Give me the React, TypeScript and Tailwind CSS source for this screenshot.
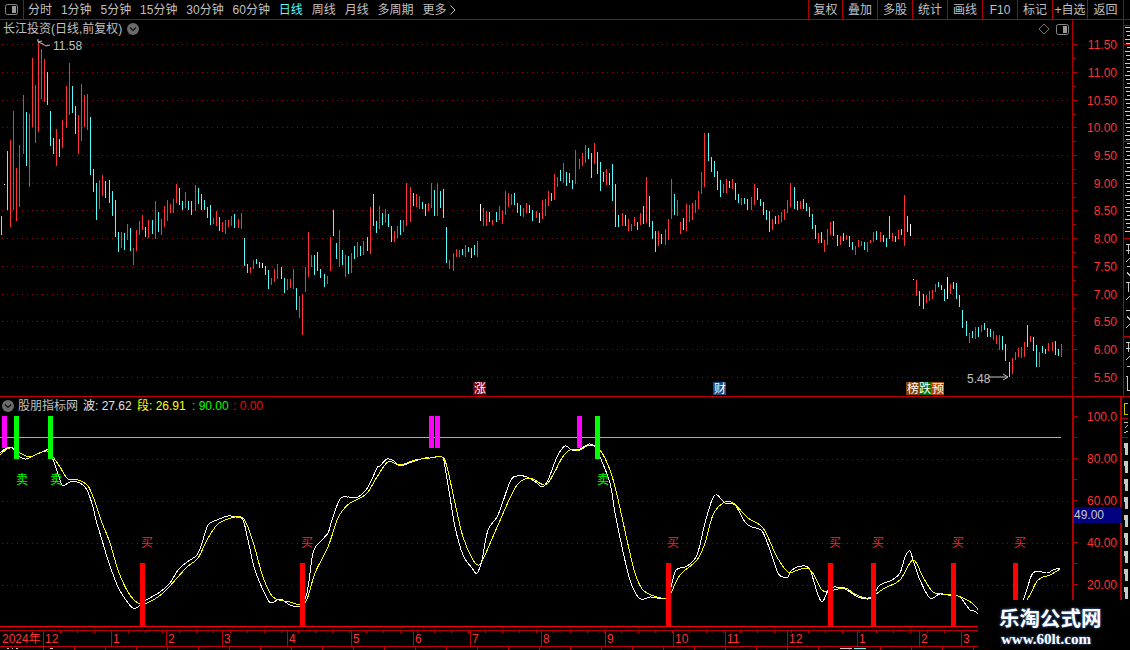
import React from 'react';

type Bar = [number, number, number, 'r' | 'c' | 'w'];

const RED = '#ff3232';
const CYAN = '#54fcfc';
const barColor = { r: RED, c: CYAN, w: '#ffffff' };

// x, top, bottom, colour: one candle each, read off the picture
const bars: Bar[] = [
  [1,216,235,'c'],[4,184,185,'w'],[7,151,210,'c'],[10,140,227,'r'],[13,111,210,'r'],[16,168,221,'r'],[19,145,207,'r'],[23,95,154,'r'],[26,112,166,'c'],[29,114,187,'r'],
  [32,58,127,'r'],[35,85,143,'r'],[38,43,132,'r'],[41,49,99,'r'],[44,59,102,'r'],[47,72,105,'c'],[50,111,146,'c'],[53,138,154,'c'],[56,129,166,'r'],[59,139,157,'c'],
  [62,120,148,'r'],[66,86,128,'r'],[69,63,115,'r'],[72,86,113,'c'],[75,106,134,'c'],[78,115,154,'r'],[81,84,141,'r'],[84,95,127,'r'],[87,94,130,'r'],[90,117,175,'c'],
  [93,169,192,'c'],[96,183,220,'c'],[99,180,209,'r'],[102,175,196,'r'],[105,181,198,'c'],[109,180,203,'c'],[112,191,216,'c'],[115,200,237,'c'],[118,232,252,'c'],[121,232,248,'r'],
  [124,233,250,'c'],[127,224,240,'r'],[130,228,251,'c'],[133,248,265,'r'],[136,230,251,'r'],[139,221,235,'r'],[142,215,230,'r'],[145,227,237,'c'],[148,220,238,'r'],[152,220,234,'c'],
  [155,201,239,'r'],[158,212,232,'c'],[161,219,235,'r'],[164,206,227,'r'],[167,200,221,'r'],[170,204,213,'r'],[173,199,213,'r'],[176,184,203,'r'],[179,188,205,'c'],[182,201,210,'c'],
  [185,192,208,'r'],[188,201,210,'c'],[191,201,215,'c'],[195,185,211,'r'],[198,188,204,'c'],[201,194,210,'c'],[204,200,210,'c'],[207,207,218,'c'],[210,205,225,'c'],[213,218,224,'r'],
  [216,211,226,'r'],[219,217,231,'c'],[222,222,232,'r'],[225,220,234,'r'],[228,220,227,'r'],[231,216,226,'r'],[234,214,228,'c'],[238,219,228,'r'],[241,213,229,'r'],[244,238,266,'c'],
  [247,264,273,'c'],[250,267,273,'r'],[253,260,269,'r'],[256,259,264,'c'],[259,262,268,'c'],[262,263,268,'w'],[265,266,275,'c'],[268,270,289,'c'],[271,278,285,'r'],[274,269,282,'r'],
  [277,264,279,'r'],[281,267,279,'c'],[284,278,293,'c'],[287,279,290,'r'],[290,279,288,'r'],[293,269,289,'r'],[296,288,310,'c'],[299,296,318,'r'],[302,294,335,'r'],[305,267,292,'r'],
  [308,232,277,'r'],[311,255,267,'r'],[314,255,275,'c'],[317,252,271,'c'],[320,269,278,'c'],[324,274,287,'c'],[327,276,284,'r'],[330,237,271,'r'],[333,210,236,'c'],[336,243,259,'c'],
  [339,230,267,'r'],[342,250,265,'c'],[345,255,277,'r'],[348,256,274,'c'],[351,253,273,'r'],[354,246,259,'c'],[357,242,257,'r'],[360,246,256,'c'],[363,241,255,'r'],[367,237,251,'c'],
  [370,207,254,'r'],[373,194,226,'c'],[376,221,233,'c'],[379,206,229,'r'],[382,213,225,'c'],[385,209,223,'r'],[388,214,227,'c'],[391,226,242,'c'],[394,231,242,'r'],[397,226,238,'r'],
  [400,220,235,'c'],[403,220,232,'r'],[406,183,226,'r'],[410,187,222,'r'],[413,193,206,'c'],[416,194,207,'r'],[419,196,209,'r'],[422,202,209,'c'],[425,204,216,'c'],[428,203,211,'r'],
  [431,183,208,'r'],[434,190,216,'c'],[437,183,216,'r'],[440,191,208,'c'],[443,189,218,'c'],[446,227,263,'c'],[449,260,269,'r'],[453,253,271,'r'],[456,249,257,'r'],[459,250,257,'r'],
  [462,249,255,'c'],[465,245,257,'r'],[468,247,252,'c'],[471,248,258,'c'],[474,245,255,'c'],[477,241,257,'r'],[480,204,221,'w'],[483,208,226,'r'],[486,211,226,'r'],[489,212,222,'c'],
  [492,220,225,'r'],[496,212,222,'c'],[499,206,220,'r'],[502,211,224,'r'],[505,191,215,'r'],[508,193,207,'r'],[511,194,205,'r'],[514,193,205,'c'],[517,203,213,'c'],[520,205,216,'c'],
  [523,208,217,'r'],[526,203,213,'r'],[529,205,213,'c'],[532,210,221,'c'],[536,211,218,'r'],[539,213,223,'c'],[542,200,219,'r'],[545,199,216,'r'],[548,191,206,'r'],[551,193,201,'c'],
  [554,174,200,'r'],[557,177,187,'r'],[560,170,181,'c'],[563,163,183,'r'],[566,172,186,'c'],[569,173,183,'c'],[572,180,189,'c'],[575,150,184,'r'],[579,159,169,'r'],[582,153,166,'r'],
  [585,145,163,'r'],[588,148,159,'c'],[591,153,178,'c'],[594,143,164,'r'],[597,152,174,'c'],[600,162,191,'c'],[603,172,182,'c'],[606,169,185,'r'],[609,173,185,'c'],[612,164,201,'c'],
  [615,184,227,'c'],[618,215,227,'c'],[622,213,226,'r'],[625,215,226,'c'],[628,219,231,'r'],[631,224,231,'r'],[634,217,226,'r'],[637,222,230,'c'],[640,213,225,'r'],[643,206,224,'c'],
  [646,177,223,'r'],[649,196,227,'c'],[652,221,239,'c'],[655,231,252,'c'],[658,231,246,'r'],[661,234,244,'c'],[665,229,245,'r'],[668,219,240,'r'],[671,179,219,'r'],[674,194,215,'c'],
  [677,200,216,'r'],[680,222,234,'r'],[683,218,230,'c'],[686,204,231,'r'],[689,205,222,'r'],[692,203,220,'r'],[695,200,213,'r'],[698,191,209,'r'],[701,172,194,'r'],[704,133,187,'r'],
  [708,133,161,'c'],[711,157,172,'c'],[714,161,177,'c'],[717,171,190,'c'],[720,180,197,'c'],[723,184,193,'r'],[726,179,193,'r'],[729,181,188,'c'],[732,179,189,'r'],[735,183,200,'c'],
  [738,194,203,'c'],[741,198,205,'r'],[744,198,204,'c'],[747,199,210,'c'],[751,197,210,'r'],[754,184,205,'r'],[757,188,200,'c'],[760,199,206,'c'],[763,202,215,'c'],[766,210,220,'c'],
  [769,211,232,'c'],[772,219,230,'r'],[775,216,224,'c'],[778,215,224,'r'],[781,212,222,'r'],[784,209,220,'r'],[787,200,213,'r'],[790,183,207,'r'],[794,187,209,'c'],[797,201,210,'c'],
  [800,201,209,'r'],[803,199,209,'c'],[806,203,211,'c'],[809,207,217,'c'],[812,214,229,'c'],[815,225,239,'c'],[818,233,243,'r'],[821,232,243,'c'],[824,240,252,'r'],[827,229,245,'r'],
  [830,222,235,'r'],[833,221,236,'c'],[837,235,246,'c'],[840,236,245,'r'],[843,233,241,'c'],[846,235,240,'r'],[849,236,247,'c'],[852,242,250,'c'],[855,246,255,'r'],[858,240,247,'r'],
  [861,241,246,'r'],[864,242,250,'c'],[867,242,252,'r'],[870,240,243,'r'],[873,232,242,'r'],[876,231,240,'c'],[880,232,242,'r'],[883,235,242,'c'],[886,238,247,'c'],[889,216,239,'c'],
  [892,233,241,'r'],[895,236,242,'c'],[898,230,239,'r'],[901,229,235,'c'],[904,195,246,'r'],[907,216,232,'c'],[910,224,236,'w'],[913,279,280,'w'],[916,280,296,'r'],[919,291,306,'c'],
  [923,294,309,'c'],[926,295,303,'r'],[929,291,301,'r'],[932,290,299,'r'],[935,284,292,'r'],[938,282,287,'c'],[941,285,290,'c'],[944,289,301,'c'],[947,277,299,'w'],[950,284,294,'r'],
  [953,282,289,'c'],[956,283,299,'c'],[959,295,307,'c'],[962,310,328,'c'],[966,321,336,'c'],[969,333,343,'r'],[972,331,338,'c'],[975,327,339,'r'],[978,327,337,'c'],[981,325,332,'r'],
  [984,323,330,'c'],[987,328,337,'c'],[990,329,337,'c'],[993,331,340,'r'],[996,335,344,'r'],[999,335,350,'r'],[1002,336,350,'c'],[1005,344,361,'c'],[1009,362,377,'c'],[1012,358,374,'r'],
  [1015,352,360,'r'],[1018,348,357,'r'],[1021,347,358,'r'],[1024,342,357,'r'],[1027,325,347,'c'],[1030,336,342,'r'],[1033,337,351,'c'],[1036,345,367,'c'],[1039,352,367,'r'],[1042,346,353,'c'],
  [1045,349,354,'c'],[1048,343,351,'r'],[1052,342,351,'r'],[1055,341,355,'c'],[1058,349,356,'c'],[1061,344,357,'r'],
];

const whiteLine = [
  [0,453],[5,449],[10,447],[14,450],[20,457],[26,459],[35,455],[44,451],[48,450],[52,457],[56,468],[60,480],[63,486],[70,482],[80,483],[87,490],[93,507],[96,520],
  [102,540],[108,560],[118,587],[128,603],[133,608],[138,607],[143,602],[160,592],[170,583],[178,570],[187,562],[197,555],[202,543],[208,525],[217,520],[228,516],[236,517],[243,520],
  [248,540],[255,570],[267,598],[272,603],[280,599],[290,605],[300,606],[307,593],[313,553],[320,542],[328,533],[332,520],[340,499],[348,497],[358,497],[368,487],[377,468],[380,466],
  [387,459],[394,461],[400,466],[412,462],[425,458],[430,458],[442,457],[445,467],[450,497],[455,527],[463,555],[472,568],[477,573],[482,560],[488,530],[498,515],[510,482],[517,476],
  [527,477],[537,483],[542,487],[548,480],[557,457],[565,446],[572,450],[580,449],[589,444],[595,447],[600,457],[610,483],[615,513],[622,547],[630,580],[638,597],[644,599],[650,597],
  [657,598],[666,598],[671,587],[676,570],[687,566],[697,555],[705,523],[712,500],[717,495],[725,503],[735,505],[745,522],[752,527],[762,531],[770,550],[778,573],[783,577],[788,577],
  [792,570],[802,566],[810,570],[818,595],[823,601],[830,588],[843,588],[850,592],[858,597],[867,599],[872,597],[880,585],[892,580],[900,573],[905,557],[910,551],[913,560],[920,580],
  [930,598],[940,594],[953,596],[960,597],[970,610],[977,613],[1000,640],[1023,600],[1033,573],[1047,573],[1053,570],[1060,568],
];

const yellowLine = [
  [0,455],[7,449],[13,448],[20,453],[30,457],[37,454],[47,451],[53,457],[60,467],[68,479],[78,480],[88,486],[95,502],[101,520],[110,543],[118,570],[128,592],[138,603],[147,603],
  [163,593],[177,578],[187,567],[198,558],[207,540],[217,525],[228,519],[243,518],[253,542],[263,577],[273,597],[290,602],[305,603],[315,573],[328,547],[337,520],[343,510],[350,503],
  [362,497],[368,492],[377,477],[388,462],[400,465],[415,460],[430,458],[442,457],[447,467],[455,503],[463,537],[473,560],[479,565],[485,555],[498,525],[515,488],[525,479],[533,479],
  [545,485],[553,475],[562,458],[570,450],[580,450],[590,445],[600,450],[610,470],[617,495],[627,540],[635,573],[643,590],[657,597],[666,598],[671,593],[680,575],[697,560],[705,543],
  [713,515],[723,503],[733,503],[748,518],[763,528],[777,557],[788,572],[795,571],[805,568],[812,572],[822,590],[830,591],[845,588],[855,594],[868,598],[885,588],[900,580],[913,560],
  [923,577],[933,592],[943,594],[958,596],[967,600],[977,608],[1000,640],[1027,600],[1038,580],[1050,575],[1060,569],
];

// catmull-rom through the read points, so the curves don't look like polygons
function smooth(p: number[][]) {
  let d = `M${p[0][0]} ${p[0][1]}`;
  for (let i = 0; i < p.length - 1; i++) {
    const a = p[Math.max(i - 1, 0)], b = p[i], c = p[i + 1], e = p[Math.min(i + 2, p.length - 1)];
    d += ` C${b[0] + (c[0] - a[0]) / 6} ${b[1] + (c[1] - a[1]) / 6} ${c[0] - (e[0] - b[0]) / 6} ${c[1] - (e[1] - b[1]) / 6} ${c[0]} ${c[1]}`;
  }
  return d;
}

const priceLabels = ['11.50','11.00','10.50','10.00','9.50','9.00','8.50','8.00','7.50','7.00','6.50','6.00','5.50'];
const priceY = (i: number) => Math.round(44.3 + i * 27.69);
const lowerGrid = [459, 501, 543, 585];
const lowerLabels: [string, number][] = [['100.0',416],['80.00',458],['60.00',500],['40.00',542],['20.00',584]];

const redBars = [140, 300, 666, 828, 871, 951, 1013];
const buyText = [147, 307, 673, 835, 878, 958, 1020];
const sellText = [22, 56, 603];

const monthMarks: [string, number][] = [['1',111],['2',166],['3',222],['4',287],['5',351],['6',413],['7',470],['8',541],['9',605],['10',673],['11',725],['12',787],['1',857],['2',919],['3',961]];

const leftTabs = ['分时','1分钟','5分钟','15分钟','30分钟','60分钟','日线','周线','月线','多周期'];
const rightTabs: [string, string][] = [
  ['复权','w-[34px]'],['叠加','w-[35px]'],['多股','w-[35px]'],['统计','w-[35px]'],['画线','w-[35px]'],
  ['F10','w-[35px]'],['标记','w-[35px]'],['+自选','w-[35px]'],['返回','w-[37px]'],
];

function PanelIcon() {
  return (
    <svg width="13" height="11" viewBox="0 0 13 11">
      <rect x="0.5" y="0.5" width="12" height="10" rx="2" fill="none" stroke="#888" />
      <rect x="7" y="2" width="4" height="7" fill="#999" />
    </svg>
  );
}

function ChevronDot() {
  return (
    <svg width="12" height="12" viewBox="0 0 12 12" className="shrink-0">
      <circle cx="6" cy="6" r="6" fill="#6a6a6a" />
      <path d="M3 4.5 L6 7.5 L9 4.5" fill="none" stroke="#111" strokeWidth="1.2" />
    </svg>
  );
}

function Dotted({ y, x2 }: { y: number; x2: number }) {
  return <line x1={2} x2={x2} y1={y + 0.5} y2={y + 0.5} stroke="#8c0c0c" strokeDasharray="1 4" />;
}

function Toolbar() {
  return (
    <div className="flex h-[20px] shrink-0 items-stretch border-b border-[#b00000] text-[12px] leading-none text-[#c0c0c0]">
      <div className="flex w-[24px] items-center justify-center border-r border-[#b00000]">
        <PanelIcon />
      </div>
      <div className="ml-[4px] flex items-center gap-[8.9px]">
        {leftTabs.map((t) => (
          <span key={t} className={t === '日线' ? 'text-[#54fcfc]' : ''}>{t}</span>
        ))}
        <span className="flex items-center gap-[4px]">
          更多
          <svg width="6" height="10" viewBox="0 0 6 10"><path d="M0.5 0.5 L5 5 L0.5 9.5" fill="none" stroke="#c0c0c0" /></svg>
        </span>
      </div>
      <div className="ml-auto mr-[6px] flex">
        {rightTabs.map(([t, w]) => (
          <div key={t} className={`flex items-center justify-center border-l border-[#b00000] last:border-r ${w}`}>{t}</div>
        ))}
      </div>
    </div>
  );
}

function MainChart() {
  return (
    <svg width="1072" height="358" viewBox="0 38 1072 358" className="block" shapeRendering="crispEdges">
      {priceLabels.map((_, i) => <Dotted key={i} y={priceY(i)} x2={1072} />)}
      {bars.map(([x, t, b, c]) => (
        <rect key={x} x={x} y={t} width={1} height={b - t} fill={barColor[c]} />
      ))}
      <g shapeRendering="auto">
        <path d="M50 45 L46 46 L43 44 L38 42 M38 39 L38 42 L42 41" fill="none" stroke="#c0c0c0" />
        <text x={53} y={50} fontSize={12} fill="#c0c0c0">11.58</text>
        <text x={967} y={383} fontSize={12} fill="#c0c0c0">5.48</text>
        <path d="M988 377 L1008 377 M1003 374 L1008 377 L1003 380" fill="none" stroke="#c0c0c0" />
      </g>
      <rect x={473} y={382} width={13} height={13} fill="#700000" />
      <rect x={713} y={382} width={13} height={13} fill="#1a4a80" />
      <rect x={906} y={382} width={13} height={13} fill="#804000" />
      <rect x={919} y={382} width={12} height={13} fill="#007000" />
      <rect x={931} y={382} width={13} height={13} fill="#b04808" />
      <g fontSize={12} fill="#ffffff" shapeRendering="auto">
        <text x={474} y={393}>涨</text>
        <text x={714} y={393}>财</text>
        <text x={907} y={393}>榜</text>
        <text x={919} y={393}>跌</text>
        <text x={932} y={393}>预</text>
      </g>
    </svg>
  );
}

function IndicatorChart() {
  return (
    <svg width="1072" height="212" viewBox="0 414 1072 212" className="block" shapeRendering="crispEdges">
      {lowerGrid.map((y) => <Dotted key={y} y={y} x2={1072} />)}
      <rect x={0} y={437} width={1061} height={1} fill="#33ff33" />
      <path d={smooth(whiteLine)} fill="none" stroke="#ffffff" />
      <path d={smooth(yellowLine)} fill="none" stroke="#ffff00" />
      {[2, 429, 435, 577].map((x) => <rect key={x} x={x} y={416} width={5} height={32} fill="#ff00ff" />)}
      {[14, 48, 595].map((x) => <rect key={x} x={x} y={416} width={5} height={43} fill="#00ff00" />)}
      {redBars.map((x) => <rect key={x} x={x} y={563} width={5} height={63} fill="#ff0000" />)}
      <g fontSize={12} textAnchor="middle" shapeRendering="auto">
        {buyText.map((x) => <text key={x} x={x} y={547} fill="#ff2020">买</text>)}
        {sellText.map((x) => <text key={x} x={x} y={484} fill="#00ff00">卖</text>)}
      </g>
    </svg>
  );
}

function PriceAxis() {
  return (
    <svg width="50" height="376" viewBox="1073 20 50 376" className="block" shapeRendering="crispEdges">
      {priceLabels.map((t, i) => (
        <g key={t}>
          <rect x={1073} y={priceY(i)} width={4} height={1} fill="#b00000" />
          {i < 12 && <rect x={1073} y={priceY(i) + 14} width={3} height={1} fill="#b00000" />}
          <text x={1117} y={priceY(i) + 5} textAnchor="end" fontSize={12} fill={RED} shapeRendering="auto">{t}</text>
        </g>
      ))}
    </svg>
  );
}

function IndicatorAxis() {
  return (
    <svg width="46" height="229" viewBox="1074 397 46 229" className="block" shapeRendering="crispEdges">
      {lowerLabels.map(([t, y]) => (
        <g key={t}>
          <rect x={1074} y={y} width={4} height={1} fill="#b00000" />
          <rect x={1074} y={y + 21} width={3} height={1} fill="#b00000" />
          <text x={1117} y={y + 5} textAnchor="end" fontSize={12} fill={RED} shapeRendering="auto">{t}</text>
        </g>
      ))}
    </svg>
  );
}

function UpperStrip() {
  const dashes = Array.from({ length: 52 }, (_, i) => 27 + i * 4);
  return (
    <svg width="6" height="376" viewBox="1124 20 6 376" className="block" shapeRendering="crispEdges">
      {[25, 44, 141, 238, 336].map((y) => <rect key={y} x={1124} y={y} width={6} height={1} fill="#b00000" />)}
      {dashes.map((y, i) => <rect key={y} x={1125 + (i % 3)} y={y} width={5} height={1} fill="#d0d0d0" />)}
      <path d="M1126 244H1130M1128 244V254M1126 250H1130M1126 262L1130 258M1127 266H1130M1127 272L1130 276M1126 282H1130M1128 282V292M1126 300L1130 296M1126 310H1130M1127 316L1130 320M1126 328L1130 324M1126 342H1130M1128 342V352M1126 348H1130M1126 360L1130 356M1127 366H1130M1126 376H1127V390H1130" fill="none" stroke="#c8c8c8" />
    </svg>
  );
}

function LowerStrip() {
  const blocks = Array.from({ length: 9 }, (_, i) => 443 + i * 18);
  return (
    <svg width="6" height="229" viewBox="1124 397 6 229" className="block" shapeRendering="crispEdges">
      <rect x={1126.5} y={403.5} width={5} height={11} fill="none" stroke="#c8c800" />
      <rect x={1124} y={418} width={6} height={1} fill="#b00000" />
      <path d="M1126 422H1130M1127 428L1130 425M1126 433L1130 431" fill="none" stroke="#c8c8c8" />
      <rect x={1124} y={437} width={6} height={1} fill="#b00000" />
      {blocks.map((y) => (
        <g key={y}>
          <rect x={1126} y={y} width={4} height={5} fill="#c8c8c8" />
          <rect x={1127} y={y + 5} width={3} height={7} fill="#c8c8c8" />
        </g>
      ))}
    </svg>
  );
}

function TimeAxis() {
  const ticks = Array.from({ length: 57 }, (_, i) => 60 + i * 17);
  const lower = Array.from({ length: 31 }, (_, i) => 43 + i * 31);
  return (
    <svg width="978" height="24" viewBox="0 626 978 24" className="block" shapeRendering="crispEdges">
      <rect x={0} y={626} width={978} height={1} fill="#ff0000" />
      <rect x={0} y={630} width={978} height={1} fill="#c00000" />
      <rect x={0} y={646} width={978} height={1} fill="#c00000" />
      <rect x={43} y={630} width={1} height={16} fill="#c00000" />
      {ticks.map((x) => <rect key={x} x={x} y={631} width={1} height={2} fill="#c00000" />)}
      {lower.map((x) => <rect key={x} x={x} y={647} width={1} height={3} fill="#c00000" />)}
      {monthMarks.map(([t, x], i) => (
        <g key={i}>
          <rect x={x} y={630} width={1} height={16} fill="#c00000" />
          <text x={x + 2} y={643} fontSize={12} fill={RED} shapeRendering="auto">{t}</text>
        </g>
      ))}
      <g fontSize={12} fill={RED} shapeRendering="auto">
        <text x={2} y={643}>2024年</text>
        <text x={45} y={643}>12</text>
      </g>
      <path d="M7 648H9M12 648H13M16 648H18M50 648H53M840 648H852" stroke="#c8c8c8" />
      <path d="M854 648H866" stroke="#54fcfc" />
    </svg>
  );
}

export default function App() {
  return (
    <div className="relative flex h-[650px] w-[1130px] flex-col overflow-hidden bg-black [font-family:'Liberation_Sans','Noto_Sans_CJK_SC',sans-serif]">
      <Toolbar />

      <div className="flex h-[377px] shrink-0 border-b border-[#c00000]">
        <div className="flex w-[1072px] flex-col">
          <div className="flex h-[18px] shrink-0 items-center pl-[3px] text-[12px] leading-none text-[#c0c0c0]">
            <span>长江投资(日线,前复权)</span>
            <span className="ml-[5px]"><ChevronDot /></span>
            <svg width="12" height="12" viewBox="0 0 12 12" className="ml-auto mr-[6px]">
              <path d="M6 1 L11 6 L6 11 L1 6 Z" fill="none" stroke="#777" />
            </svg>
            <span className="mr-[3px]"><PanelIcon /></span>
          </div>
          <MainChart />
        </div>
        <div className="w-[51px] border-l border-[#b00000]"><PriceAxis /></div>
        <div className="w-[7px] border-l border-[#b00000]"><UpperStrip /></div>
      </div>

      <div className="flex h-[229px] shrink-0">
        <div className="flex w-[1072px] flex-col">
          <div className="flex h-[17px] shrink-0 items-center pl-[2px] text-[12px] leading-none text-[#c0c0c0]">
            <ChevronDot />
            <span className="ml-[4px]">股朋指标网</span>
            <span className="ml-[5px] w-[54px] text-[#e0e0e0]">波: 27.62</span>
            <span className="w-[55px] text-[#ffff00]">段: 26.91</span>
            <span className="w-[41px] text-[#00ff00]">: 90.00</span>
            <span className="text-[#ff0000]">: 0.00</span>
          </div>
          <IndicatorChart />
        </div>
        <div className="w-[50px] border-x-2 border-[#b00000]"><IndicatorAxis /></div>
        <div className="w-[6px]"><LowerStrip /></div>
      </div>

      <TimeAxis />

      {/* blue value tag sitting on the axis */}
      <div className="absolute left-[1074px] top-[507px] flex h-[16px] w-[48px] items-center bg-[#000080] text-[12px] leading-none text-[#c8c8c8]">49.00</div>

      {/* site watermark pasted over the corner */}
      <div className="absolute left-[978px] top-[600px] flex h-[50px] w-[152px] flex-col items-start bg-black pl-[21px] pt-[6px] font-bold text-white [text-shadow:0_0_3px_#4a80d8]">
        <span className="text-[20.5px] leading-[26px] [font-family:'Liberation_Serif','Noto_Sans_CJK_SC',serif]">乐淘公式网</span>
        <span className="mt-[0px] pl-[2px] text-[15px] leading-[15px] [font-family:'Liberation_Serif',serif]">www.60lt.com</span>
      </div>
    </div>
  );
}
